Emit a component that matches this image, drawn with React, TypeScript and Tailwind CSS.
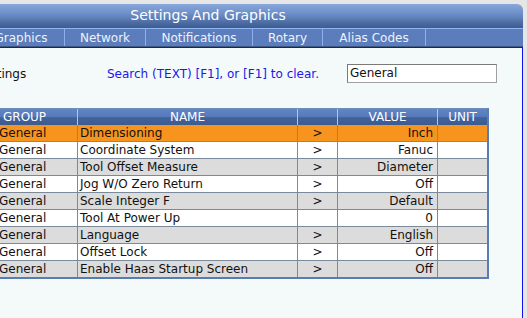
import React from "react";

const rows: { name: string; arrow: boolean; value: string }[] = [
  { name: "Dimensioning", arrow: true, value: "Inch" },
  { name: "Coordinate System", arrow: true, value: "Fanuc" },
  { name: "Tool Offset Measure", arrow: true, value: "Diameter" },
  { name: "Jog W/O Zero Return", arrow: true, value: "Off" },
  { name: "Scale Integer F", arrow: true, value: "Default" },
  { name: "Tool At Power Up", arrow: false, value: "0" },
  { name: "Language", arrow: true, value: "English" },
  { name: "Offset Lock", arrow: true, value: "Off" },
  { name: "Enable Haas Startup Screen", arrow: true, value: "Off" },
];

const tabs: { label: string; w: string }[] = [
  { label: "Settings", w: "w-[85px]" },
  { label: "Graphics", w: "w-[87px]" },
  { label: "Network", w: "w-[81px]" },
  { label: "Notifications", w: "w-[107px]" },
  { label: "Rotary", w: "w-[70px]" },
  { label: "Alias Codes", w: "w-[103px]" },
];

export default function App() {
  return (
    <div
      className="w-[527px] h-[318px] overflow-hidden bg-[#e6e6e6] text-[12px]"
      style={{ fontFamily: '"DejaVu Sans", Verdana, sans-serif' }}
    >
      <div className="w-[630px] -ml-[107px] pt-[4px] flex flex-col h-[318px]">
        {/* title bar */}
        <div className="h-[24px] rounded-tr-[6px] bg-[linear-gradient(to_bottom,#88a8dc,#6a8cc6_45%,#4a6aa0_80%,#3d5b8e)] flex justify-center text-white text-[14px] leading-[18px] pt-[2px]">
          Settings And Graphics
        </div>
        <div className="h-px bg-[#8fb6f4]" />
        {/* tabs */}
        <div className="h-[17px] bg-[#5b7dbb] flex text-[#eef3fb] leading-[17px]">
          {tabs.map((t) => (
            <div key={t.label} className={`${t.w} border-r border-[#8db0ec] flex justify-center shrink-0 pt-[1px]`}>
              {t.label}
            </div>
          ))}
        </div>
        <div className="h-px bg-[#3e5784]" />
        {/* content */}
        <div className="flex-1 bg-[#f4f9fa] border-t border-r border-[#1010ee]">
          <div className="flex items-center mt-[16px] h-[19px]">
            <span className="w-[214px] pl-[84px] text-[#111] pt-[1px]">Settings</span>
            <span className="w-[240px] text-[#1a1ae6] pt-[1px]">Search (TEXT) [F1], or [F1] to clear.</span>
            <div className="w-[150px] h-[19px] bg-white border border-t-[#7a7a7a] border-l-[#7a7a7a] border-b-[#a0a0a0] border-r-[#a0a0a0] pl-[2px] leading-[17px] text-[#111]">
              General
            </div>
          </div>
          {/* table */}
          <div className="ml-[102px] mt-[25px] w-[494px] border-t border-t-[#6f8ec0] border-r-2 border-r-[#5b7bb5] border-b-2 border-b-[#5b7bb5]">
            <div className="flex h-[16px] leading-[16px] text-white bg-[linear-gradient(to_bottom,#6185c5,#5679bb_48%,#42629b_54%,#3c5b91)]">
              <div className="w-[83px] border-r border-[#b8c4d8] pl-[8px]">GROUP</div>
              <div className="w-[220px] border-r border-[#b8c4d8] text-center">NAME</div>
              <div className="w-[40px] border-r border-[#b8c4d8]" />
              <div className="w-[100px] border-r border-[#b8c4d8] text-center">VALUE</div>
              <div className="w-[49px] text-center">UNIT</div>
            </div>
            {rows.map((r, i) => {
              const bg = i === 0 ? "bg-[#f7941e]" : i % 2 === 1 ? "bg-white" : "bg-[#dcdcdc]";
              const last = i === rows.length - 1;
              return (
                <div
                  key={r.name}
                  className={`flex ${last ? "h-[16px]" : "h-[17px] border-b border-[#7b8a9b]"} leading-[16px] text-[#111] ${bg}`}
                >
                  <div className="w-[83px] border-r border-[#7b8a9b] pl-[4px]">General</div>
                  <div className="w-[220px] border-r border-[#7b8a9b] pl-[2px] whitespace-nowrap">{r.name}</div>
                  <div className="w-[40px] border-r border-[#7b8a9b] text-center">{r.arrow ? ">" : ""}</div>
                  <div className="w-[100px] border-r border-[#7b8a9b] text-right pr-[4px]">{r.value}</div>
                  <div className="w-[49px]" />
                </div>
              );
            })}
          </div>
        </div>
      </div>
    </div>
  );
}
